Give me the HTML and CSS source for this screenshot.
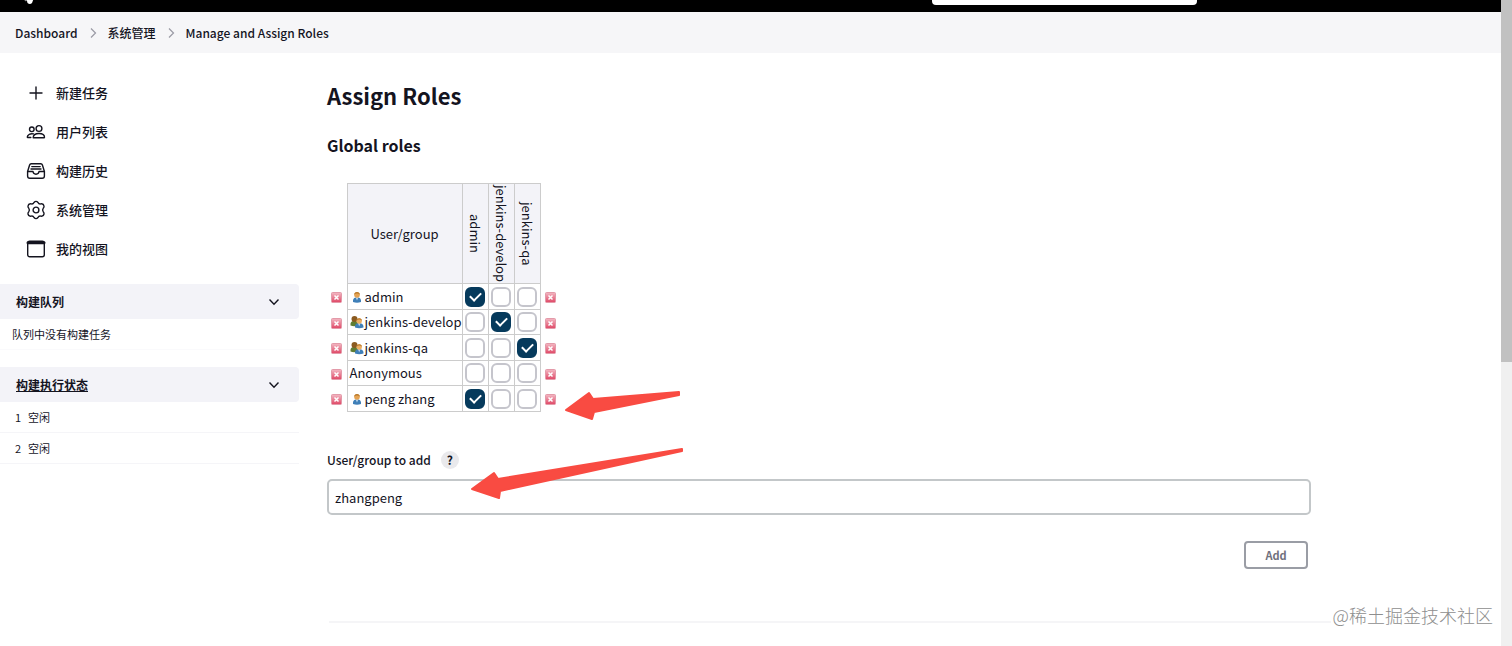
FILE: index.html
```
<!DOCTYPE html>
<html lang="zh-CN">
<head>
  <meta charset="UTF-8" />
  <meta name="viewport" content="width=device-width, initial-scale=1.0"/>
  <title>Assign Roles [Jenkins]</title>
  <link rel="stylesheet" href="styles.css">
</head>
<body>
  <svg class="symbols" aria-hidden="true">
    <defs>
      <linearGradient id="pink" x1="0" y1="0" x2="0" y2="1">
        <stop offset="0" stop-color="#f3b9c4"/>
        <stop offset="1" stop-color="#df4665"/>
      </linearGradient>
      <symbol id="remove" viewBox="0 0 11 11">
        <rect x="0.500" y="0.500" width="10" height="10" rx="1" fill="url(#pink)" stroke="#e39aa9"/>
        <path d="M3.500 3.500 L7.500 7.500 M7.500 3.500 L3.500 7.500" stroke="#fff" stroke-width="1.500" fill="none"/>
      </symbol>
      <symbol id="person" viewBox="0 0 14 14">
        <path d="M3 12 Q2.600 8.200 5.500 7.500 H8.500 Q11.400 8.200 11 12 Q7 13.500 3 12Z" fill="#3f7fb8"/>
        <path d="M5.800 7.500 L7 10.500 L8.200 7.500Z" fill="#c5dcf0"/>
        <circle cx="7" cy="5" r="2.800" fill="#e5a353"/>
        <path d="M4.200 4.800 Q4.300 2 7 2 Q9.700 2 9.800 4.800 Q8.500 3.400 7 3.500 Q5.500 3.400 4.200 4.800Z" fill="#b8782a"/>
      </symbol>
      <symbol id="group" viewBox="0 0 14 14">
        <path d="M0.500 10.500 Q0 6.500 3 6 H6 Q8 6.500 8 10.500 Q4 11.800 0.500 10.500Z" fill="#5f7d33"/>
        <circle cx="4.500" cy="4" r="3" fill="#8a5a20"/>
        <path d="M5 12.500 Q4.600 9 7.500 8.300 H10.500 Q13.800 9 13.500 12.500 Q9 13.800 5 12.500Z" fill="#3f7fb8"/>
        <path d="M8 8.300 L9.200 11.200 L10.400 8.300Z" fill="#c5dcf0"/>
        <circle cx="9.200" cy="6" r="2.700" fill="#ecae62"/>
        <path d="M6.500 5.800 Q6.600 3.200 9.200 3.200 Q11.800 3.200 11.900 5.800 Q10.500 4.500 9.200 4.600 Q7.800 4.500 6.500 5.800Z" fill="#b8782a"/>
      </symbol>
      <symbol id="chevron-right" viewBox="0 0 8 12">
        <path d="M2 1.500 L6.500 6 L2 10.500" fill="none" stroke="#9a9aa5" stroke-width="1.200"/>
      </symbol>
      <symbol id="chevron-down" viewBox="0 0 12 12">
        <path d="M1.500 3.500 L6 8.200 L10.500 3.500" fill="none" stroke="#14141f" stroke-width="1.400"/>
      </symbol>
    </defs>
  </svg>

  <div class="page">
    <header class="top-bar">
      <svg class="logo" viewBox="0 0 14 6" aria-hidden="true">
        <path d="M3 0 L5 2 L5.500 4 Q8 6 10 4 L11.500 0Z" fill="#fff"/>
        <path d="M1 0 L4 2.500 L5 1Z" fill="#999"/>
      </svg>
      <input class="search" type="search" aria-label="Search">
    </header>

    <nav class="breadcrumbs" aria-label="Breadcrumb">
      <a href="#">Dashboard</a>
      <svg class="sep" aria-hidden="true"><use href="#chevron-right"/></svg>
      <a href="#">系统管理</a>
      <svg class="sep" aria-hidden="true"><use href="#chevron-right"/></svg>
      <a href="#">Manage and Assign Roles</a>
    </nav>

    <div class="columns">
      <aside class="side">
        <nav class="tasks">
          <a href="#">
            <svg viewBox="0 0 20 20"><path d="M10 4 V16 M4 10 H16"/></svg>
            新建任务
          </a>
          <a href="#">
            <svg viewBox="0 0 20 20">
              <circle cx="13" cy="6.500" r="2.900"/>
              <circle cx="5.800" cy="7.300" r="2.300"/>
              <path d="M7.200 15.800 C7.200 12.800 9.800 11.500 13 11.500 C16.200 11.500 18.500 12.800 18.500 15.300 Q18.500 15.800 18 15.800Z"/>
              <path d="M7.500 11.900 C4.500 11.300 1.300 12.500 1.300 15 Q1.300 15.500 1.800 15.500 H4.800"/>
            </svg>
            用户列表
          </a>
          <a href="#">
            <svg viewBox="0 0 20 20">
              <path d="M1.600 10.500 L3.600 4 Q4 2.800 5.200 2.800 H14.800 Q16 2.800 16.400 4 L18.400 10.500 V15 Q18.400 17.200 16.200 17.200 H3.800 Q1.600 17.200 1.600 15Z"/>
              <path d="M1.600 10.500 H7 Q7.300 13.200 10 13.200 Q12.700 13.200 13 10.500 H18.400 M5.800 5.600 H14.200 M5 8 H15"/>
            </svg>
            构建历史
          </a>
          <a href="#">
            <svg viewBox="0 0 20 20">
              <circle cx="10" cy="10" r="2.900"/>
              <path d="M8 2.500 Q10 0.300 12 2.500 Q12.800 4.300 14.800 3.900 Q17.500 3.400 18 6 Q18.300 7.200 17.200 8.300 Q16 10 17.200 11.700 Q18.300 12.800 18 14 Q17.500 16.600 14.800 16.100 Q12.800 15.700 12 17.500 Q10 19.700 8 17.500 Q7.200 15.700 5.200 16.100 Q2.500 16.600 2 14 Q1.700 12.800 2.800 11.700 Q4 10 2.800 8.300 Q1.700 7.200 2 6 Q2.500 3.400 5.200 3.900 Q7.200 4.300 8 2.500Z"/>
            </svg>
            系统管理
          </a>
          <a href="#">
            <svg viewBox="0 0 20 20">
              <rect x="1.700" y="2.200" width="16.600" height="15.600" rx="2"/>
              <path d="M2 3.800 H18" stroke-width="3"/>
            </svg>
            我的视图
          </a>
        </nav>

        <section class="pane">
          <div class="pane-header">
            <h2>构建队列</h2>
            <button type="button" aria-label="收起构建队列"><svg><use href="#chevron-down"/></svg></button>
          </div>
          <p class="empty">队列中没有构建任务</p>
        </section>

        <section class="pane">
          <div class="pane-header">
            <h2><a href="#">构建执行状态</a></h2>
            <button type="button" aria-label="收起构建执行状态"><svg><use href="#chevron-down"/></svg></button>
          </div>
          <ul class="executors">
            <li><span>1</span>空闲</li>
            <li><span>2</span>空闲</li>
          </ul>
        </section>
      </aside>

      <main class="main">
        <h1>Assign Roles</h1>
        <h2 class="section-title">Global roles</h2>

        <table class="roles">
          <thead>
            <tr>
              <td class="edge"></td>
              <th class="name" scope="col">User/group</th>
              <th scope="col"><span>admin</span></th>
              <th scope="col"><span>jenkins-develop</span></th>
              <th scope="col"><span>jenkins-qa</span></th>
              <td class="edge"></td>
            </tr>
          </thead>
          <tbody>
            <tr>
              <td class="edge"><button type="button" aria-label="Remove admin"><svg><use href="#remove"/></svg></button></td>
              <th class="name" scope="row"><div><svg><use href="#person"/></svg>admin</div></th>
              <td><input type="checkbox" aria-label="admin: admin" checked></td>
              <td><input type="checkbox" aria-label="admin: jenkins-develop"></td>
              <td><input type="checkbox" aria-label="admin: jenkins-qa"></td>
              <td class="edge"><button type="button" aria-label="Remove admin"><svg><use href="#remove"/></svg></button></td>
            </tr>
            <tr>
              <td class="edge"><button type="button" aria-label="Remove jenkins-develop"><svg><use href="#remove"/></svg></button></td>
              <th class="name" scope="row"><div><svg><use href="#group"/></svg>jenkins-develop</div></th>
              <td><input type="checkbox" aria-label="jenkins-develop: admin"></td>
              <td><input type="checkbox" aria-label="jenkins-develop: jenkins-develop" checked></td>
              <td><input type="checkbox" aria-label="jenkins-develop: jenkins-qa"></td>
              <td class="edge"><button type="button" aria-label="Remove jenkins-develop"><svg><use href="#remove"/></svg></button></td>
            </tr>
            <tr>
              <td class="edge"><button type="button" aria-label="Remove jenkins-qa"><svg><use href="#remove"/></svg></button></td>
              <th class="name" scope="row"><div><svg><use href="#group"/></svg>jenkins-qa</div></th>
              <td><input type="checkbox" aria-label="jenkins-qa: admin"></td>
              <td><input type="checkbox" aria-label="jenkins-qa: jenkins-develop"></td>
              <td><input type="checkbox" aria-label="jenkins-qa: jenkins-qa" checked></td>
              <td class="edge"><button type="button" aria-label="Remove jenkins-qa"><svg><use href="#remove"/></svg></button></td>
            </tr>
            <tr>
              <td class="edge"><button type="button" aria-label="Remove Anonymous"><svg><use href="#remove"/></svg></button></td>
              <th class="name" scope="row"><div>Anonymous</div></th>
              <td><input type="checkbox" aria-label="Anonymous: admin"></td>
              <td><input type="checkbox" aria-label="Anonymous: jenkins-develop"></td>
              <td><input type="checkbox" aria-label="Anonymous: jenkins-qa"></td>
              <td class="edge"><button type="button" aria-label="Remove Anonymous"><svg><use href="#remove"/></svg></button></td>
            </tr>
            <tr>
              <td class="edge"><button type="button" aria-label="Remove peng zhang"><svg><use href="#remove"/></svg></button></td>
              <th class="name" scope="row"><div><svg><use href="#person"/></svg>peng zhang</div></th>
              <td><input type="checkbox" aria-label="peng zhang: admin" checked></td>
              <td><input type="checkbox" aria-label="peng zhang: jenkins-develop"></td>
              <td><input type="checkbox" aria-label="peng zhang: jenkins-qa"></td>
              <td class="edge"><button type="button" aria-label="Remove peng zhang"><svg><use href="#remove"/></svg></button></td>
            </tr>
          </tbody>
        </table>

        <div class="field-label">
          <label for="userToAdd">User/group to add</label>
          <button type="button" class="help" aria-label="Help">?</button>
        </div>
        <input class="text-input" id="userToAdd" type="text" value="zhangpeng">
        <div class="actions">
          <button type="button" class="add">Add</button>
        </div>
        <hr>
      </main>
    </div>

    <svg class="arrows" viewBox="0 0 230 130" aria-hidden="true">
      <path d="M106 30 L129 13 L133 19 L219 12 V15 L134 32 L132 39Z"/>
      <path d="M12 109 L34 93 L38 99 L222 69 V71 L40 111 L39 118Z"/>
    </svg>
    <div class="watermark">@稀土掘金技术社区</div>
  </div>
  <div class="scrollbar"><div class="thumb"></div></div>
</body>
</html>
```
FILE: styles.css
```
* { box-sizing: border-box; }
body { margin: 0; height: 100vh; overflow: hidden; display: flex; background: #fff; color: #14141f; font: 13px/20px "Noto Sans CJK SC", sans-serif; }
a { color: inherit; text-decoration: none; }
button { border: 0; padding: 0; background: none; color: inherit; font: inherit; cursor: pointer; }
h1, h2, p, ul { margin: 0; padding: 0; }
svg { display: block; flex: none; }
.symbols { position: absolute; width: 0; height: 0; }

.page { position: relative; flex: 1; min-width: 0; overflow: hidden; }
.scrollbar { width: 11px; background: #f0f0f0; }
.thumb { height: 56%; background: #c1c1c1; }

.top-bar { display: flex; justify-content: space-between; align-items: flex-end; height: 12px; padding: 0 304px 7px 22px; background: #000; }
.logo { width: 14px; height: 6px; }
.search { width: 265px; height: 30px; border: 0; border-radius: 4px; background: #fff; }

.breadcrumbs { display: flex; align-items: center; gap: 11px; height: 41px; padding: 0 15px; background: #f6f6f8; font-size: 12px; font-weight: 500; }
.sep { width: 8px; height: 12px; }

.columns { display: flex; }
.side { width: 299px; flex: none; padding-top: 20px; }
.tasks { margin-bottom: 16px; }
.tasks a { display: flex; align-items: center; gap: 10px; height: 39px; padding-left: 26px; font-weight: 500; }
.tasks svg { width: 20px; height: 20px; fill: none; stroke: #14141f; stroke-width: 1.4; stroke-linejoin: round; stroke-linecap: round; }
.pane { margin-bottom: 17px; }
.pane-header { display: flex; align-items: center; justify-content: space-between; height: 35px; padding: 0 19px 0 16px; background: #f3f3f8; border-radius: 0 4px 4px 0; }
.pane-header h2 { font-size: 12px; font-weight: 700; }
.pane-header h2 a { text-decoration: underline; }
.pane-header svg { width: 12px; height: 12px; }
.empty { height: 31px; padding-left: 12px; border-bottom: 1px solid #fafafc; font-size: 11px; line-height: 30px; }
.executors { list-style: none; font-size: 11px; }
.executors li { display: flex; gap: 7px; height: 31px; padding-left: 15px; border-bottom: 1px solid #f5f5f8; line-height: 31px; }

.main { flex: 1; min-width: 0; padding: 23px 190px 0 28px; }
h1 { font-size: 22px; line-height: 38px; font-weight: 700; }
.section-title { margin-top: 20px; font-size: 16px; line-height: 22px; font-weight: 700; }

.roles { margin-top: 27px; border-collapse: collapse; table-layout: fixed; width: 233px; }
.roles th, .roles td { border: 1px solid #ccc; padding: 0; font-weight: 400; width: 26px; }
.roles .name { width: 115px; }
.roles .edge { width: 20px; border-width: 0 1px; }
.roles .edge:first-child { border-left: 0; }
.roles .edge:last-child { border-right: 0; }
.roles thead th { height: 100px; background: #f3f3f8; }
.roles thead span { display: block; width: 20px; margin: 0 auto; writing-mode: vertical-rl; line-height: 20px; white-space: nowrap; }
.roles tbody tr { height: 26px; }
.roles tbody tr:nth-child(even) { height: 25px; }
.roles tbody .name div { display: flex; align-items: center; gap: 1px; padding-left: 2px; white-space: nowrap; }
.roles .name svg { width: 14px; height: 14px; }
.roles .edge button { display: block; margin: 2px auto 0; }
.roles .edge svg { width: 11px; height: 11px; }
.roles input { appearance: none; display: block; width: 20px; height: 20px; margin: 0 auto; border: 2px solid #c5c5cc; border-radius: 6px; background: #fff; }
.roles input:checked { border-color: #063a5c; background: #063a5c; display: grid; place-items: center; }
.roles input:checked::before { content: ""; width: 9px; height: 5px; margin-bottom: 3px; border: solid #fff; border-width: 0 0 2px 2px; transform: rotate(-45deg); }

.field-label { display: flex; align-items: center; gap: 10px; margin-top: 38px; font-size: 12px; font-weight: 500; }
.help { width: 18px; height: 18px; border-radius: 9px; background: #e9e9ec; line-height: 18px; font-weight: 700; }
.text-input { display: block; width: 100%; height: 36px; margin-top: 9px; padding: 0 6px; border: 2px solid #c3c7c9; border-radius: 5px; background: #fff; color: inherit; font: inherit; }
.actions { display: flex; justify-content: flex-end; margin-top: 26px; padding-right: 3px; }
.add { width: 64px; height: 28px; border: 2px solid #9a9da5; border-radius: 4px; color: #70707d; font-size: 11px; font-weight: 700; }
hr { margin: 52px -20px 0 2px; border: 0; border-top: 2px solid #f5f5f7; }

.arrows { position: absolute; left: 460px; top: 380px; width: 230px; height: 130px; fill: #f94b42; stroke: #f94b42; stroke-width: 2; stroke-linejoin: round; }
.watermark { position: absolute; right: 8px; bottom: 18px; color: #8e8e8e; font-size: 18px; line-height: 26px; font-weight: 300; }
```
